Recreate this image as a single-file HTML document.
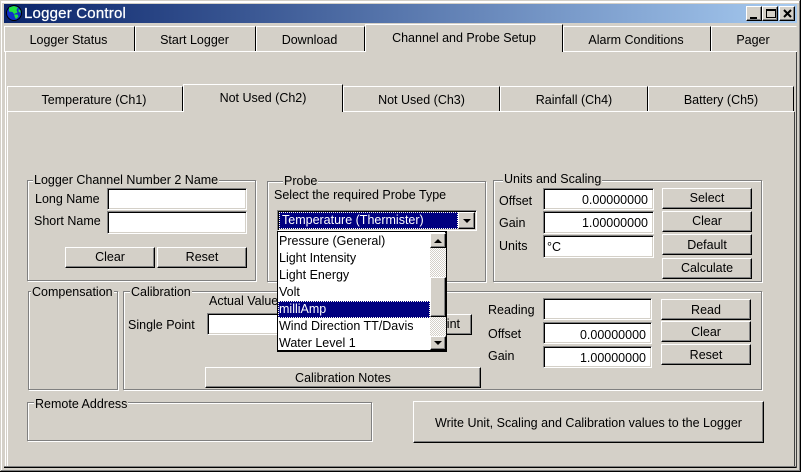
<!DOCTYPE html>
<html><head><meta charset="utf-8"><title>Logger Control</title>
<style>
html,body{margin:0;padding:0;background:#d4d0c8}
body{position:relative;width:801px;height:472px;overflow:hidden;font:12.5px/15px "Liberation Sans",sans-serif;color:#000}
div,span{position:absolute;box-sizing:border-box;white-space:nowrap}
.l{background:#fff}.g{background:#808080}.k{background:#000}.d{background:#404040}.b{background:#d4d0c8}
.t{height:15px}
.c{text-align:center}
.btn{background:#d4d0c8;border-style:solid;border-width:1px;border-color:#fff #000 #000 #fff;box-shadow:inset -1px -1px 0 #808080;text-align:center}
.in{background:#fff;border-style:solid;border-width:1px;border-color:#808080 #fff #fff #808080;box-shadow:inset 1px 1px 0 #000,inset -1px -1px 0 #d4d0c8;outline:0;text-align:right;padding:4px 5px 0 0;line-height:15px}
.grp{border:1px solid #808080;box-shadow:1px 1px 0 #fff,inset 1px 1px 0 #fff}
.lg{background:#d4d0c8;padding:0 1px;height:15px}
.tab{background:#d4d0c8;border-style:solid;border-width:1px 1px 0 1px;border-color:#fff #000 #000 #fff;text-align:center}
.sh{padding-right:2px}
.item{left:0;width:152px;height:17px;padding-left:1px;line-height:17px}
.chk{background-color:#fff;background-image:linear-gradient(45deg,#d4d0c8 25%,transparent 25%,transparent 75%,#d4d0c8 75%),linear-gradient(45deg,#d4d0c8 25%,transparent 25%,transparent 75%,#d4d0c8 75%);background-size:2px 2px;background-position:0 0,1px 1px}
</style></head><body>

<!-- outer window frame -->
<div class="l" style="left:1px;top:1px;width:798px;height:2px"></div>
<div class="l" style="left:1px;top:1px;width:1px;height:469px"></div>
<div class="g" style="left:799px;top:1px;width:1px;height:470px"></div>
<div class="k" style="left:800px;top:0;width:1px;height:472px"></div>
<div class="g" style="left:1px;top:470px;width:799px;height:1px"></div>
<div class="k" style="left:0;top:471px;width:801px;height:1px"></div>

<!-- title bar -->
<div style="left:4px;top:4px;width:793px;height:19px;background:linear-gradient(90deg,#0a246a,#a6caf0)"></div>
<svg style="position:absolute;left:6px;top:5px" width="16" height="16" viewBox="0 0 16 16"><circle cx="8" cy="8" r="7.5" fill="#1030c8" stroke="#000" stroke-width="1"/><path d="M3 2.5 L8 1 L12 2.5 L10.5 5 L11.5 7.5 L8 9 L6.5 7 L3 6.5Z M8 9.5 L11.5 9.5 L12.5 11.5 L10 14 L9 12.5Z M12.5 4 L14.5 5.5 L14.5 8 L12.5 6.5Z" fill="#20e040"/></svg>
<div style="left:24px;top:5px;color:#fff;font-size:15px;line-height:18px;letter-spacing:.2px;-webkit-text-stroke:.25px #fff">Logger Control</div>
<div class="btn" style="left:746px;top:6px;width:16px;height:15px"><div class="k" style="left:3px;top:10px;width:7px;height:2px"></div></div>
<div class="btn" style="left:762px;top:6px;width:16px;height:15px"><div style="left:3px;top:2px;width:10px;height:9px;border:1px solid #000;border-top-width:2px"></div></div>
<div class="btn" style="left:779px;top:6px;width:16px;height:15px"><svg style="position:absolute;left:3px;top:2px" width="9" height="9" viewBox="0 0 9 9"><path d="M1 1 L8 8 M8 1 L1 8" stroke="#000" stroke-width="2"/></svg></div>

<!-- top tabs -->
<div class="tab sh" style="left:4px;top:26px;width:131px;height:25px;line-height:27px">Logger Status</div>
<div class="tab sh" style="left:135px;top:26px;width:121px;height:25px;line-height:27px">Start Logger</div>
<div class="tab sh" style="left:256px;top:26px;width:109px;height:25px;line-height:27px">Download</div>
<div class="tab sh" style="left:563px;top:26px;width:148px;height:25px;line-height:27px">Alarm Conditions</div>
<div class="tab sh" style="left:711px;top:26px;width:86px;height:25px;line-height:27px;border-right-color:#d4d0c8">Pager</div>
<div class="l" style="left:4px;top:51px;width:361px;height:1px"></div>
<div class="l" style="left:563px;top:51px;width:234px;height:1px"></div>
<div class="tab" style="left:365px;top:24px;width:198px;height:28px;line-height:27px;border-bottom:0">Channel and Probe Setup</div>

<!-- outer pane -->
<div class="l" style="left:5px;top:52px;width:1px;height:415px"></div>
<div class="d" style="left:796px;top:52px;width:1px;height:416px"></div>
<div class="g" style="left:4px;top:466px;width:792px;height:1px"></div>
<div class="k" style="left:4px;top:467px;width:792px;height:1px"></div>

<!-- inner tabs -->
<div class="tab sh" style="left:7px;top:86px;width:176px;height:25px;line-height:27px">Temperature (Ch1)</div>
<div class="tab" style="left:343px;top:86px;width:157px;height:25px;line-height:27px">Not Used (Ch3)</div>
<div class="tab" style="left:500px;top:86px;width:148px;height:25px;line-height:27px">Rainfall (Ch4)</div>
<div class="tab" style="left:648px;top:86px;width:146px;height:25px;line-height:27px">Battery (Ch5)</div>
<div class="l" style="left:7px;top:111px;width:176px;height:1px"></div>
<div class="l" style="left:343px;top:111px;width:451px;height:1px"></div>
<div class="tab" style="left:183px;top:84px;width:160px;height:28px;line-height:27px;border-bottom:0">Not Used (Ch2)</div>
<div class="l" style="left:7px;top:112px;width:1px;height:354px"></div>
<div class="d" style="left:794px;top:112px;width:1px;height:354px"></div>

<!-- channel name group -->
<div class="grp" style="left:27px;top:180px;width:229px;height:101px"></div>
<div class="lg" style="left:33px;top:173px">Logger Channel Number 2 Name</div>
<div class="t" style="left:35px;top:192px">Long Name</div>
<div class="t" style="left:34px;top:214px">Short Name</div>
<div class="in" style="left:107px;top:188px;width:140px;height:22px"></div>
<div class="in" style="left:107px;top:211px;width:140px;height:23px"></div>
<div class="btn" style="left:65px;top:247px;width:90px;height:21px;line-height:19px">Clear</div>
<div class="btn" style="left:157px;top:247px;width:90px;height:21px;line-height:19px">Reset</div>

<!-- probe group -->
<div class="grp" style="left:267px;top:181px;width:219px;height:101px"></div>
<div class="lg" style="left:283px;top:174px">Probe</div>
<div class="t" style="left:274px;top:188px">Select the required Probe Type</div>
<div class="in" style="left:277px;top:210px;width:200px;height:21px"></div>
<div style="left:279px;top:212px;width:179px;height:17px;background:#000080;color:#fff;line-height:17px;padding-left:3px;outline:1px dotted #ffe;outline-offset:-1px">Temperature (Thermister)</div>
<div class="btn" style="left:458px;top:212px;width:17px;height:17px"><div style="left:4px;top:6px;width:0;height:0;border:4px solid transparent;border-top-color:#000;border-bottom:0"></div></div>

<!-- units group -->
<div class="grp" style="left:493px;top:180px;width:269px;height:102px"></div>
<div class="lg" style="left:503px;top:172px">Units and Scaling</div>
<div class="t" style="left:499px;top:194px">Offset</div>
<div class="t" style="left:499px;top:216px">Gain</div>
<div class="t" style="left:499px;top:239px">Units</div>
<div class="in" style="left:543px;top:188px;width:111px;height:22px">0.00000000</div>
<div class="in" style="left:543px;top:211px;width:111px;height:23px">1.00000000</div>
<div class="in" style="left:543px;top:235px;width:111px;height:23px;text-align:left;padding-left:3px">°C</div>
<div class="btn" style="left:662px;top:188px;width:90px;height:21px;line-height:19px">Select</div>
<div class="btn" style="left:662px;top:211px;width:90px;height:21px;line-height:19px">Clear</div>
<div class="btn" style="left:662px;top:234px;width:90px;height:21px;line-height:21px">Default</div>
<div class="btn" style="left:662px;top:258px;width:90px;height:21px;line-height:19px">Calculate</div>

<!-- compensation -->
<div class="grp" style="left:28px;top:291px;width:90px;height:99px"></div>
<div class="lg" style="left:31px;top:285px">Compensation</div>

<!-- calibration -->
<div class="grp" style="left:123px;top:291px;width:639px;height:99px"></div>
<div class="lg" style="left:130px;top:285px">Calibration</div>
<div class="t" style="left:209px;top:294px">Actual Value</div>
<div class="t" style="left:128px;top:318px">Single Point</div>
<div class="in" style="left:207px;top:313px;width:140px;height:22px"></div>
<div class="btn" style="left:350px;top:314px;width:122px;height:21px;line-height:19px;text-align:right;padding-right:11px">Single Point</div>
<div class="t" style="left:488px;top:303px">Reading</div>
<div class="t" style="left:488px;top:327px">Offset</div>
<div class="t" style="left:488px;top:349px">Gain</div>
<div class="in" style="left:543px;top:298px;width:109px;height:22px"></div>
<div class="in" style="left:543px;top:322px;width:109px;height:22px;padding-top:5px">0.00000000</div>
<div class="in" style="left:543px;top:346px;width:109px;height:22px">1.00000000</div>
<div class="btn" style="left:661px;top:299px;width:90px;height:21px;line-height:21px">Read</div>
<div class="btn" style="left:661px;top:321px;width:90px;height:21px;line-height:21px">Clear</div>
<div class="btn" style="left:661px;top:344px;width:90px;height:21px;line-height:21px">Reset</div>
<div class="btn" style="left:205px;top:367px;width:276px;height:21px;line-height:20px">Calibration Notes</div>

<!-- remote address -->
<div class="grp" style="left:27px;top:402px;width:345px;height:39px"></div>
<div class="lg" style="left:34px;top:397px">Remote Address</div>

<!-- write -->
<div class="btn" style="left:413px;top:401px;width:351px;height:42px;line-height:42px">Write Unit, Scaling and Calibration values to the Logger</div>

<!-- dropdown list -->
<div style="left:277px;top:231px;width:170px;height:121px;background:#fff;border:1px solid #000;box-shadow:inset -1px -1px 0 #000">
<div class="item" style="top:1px">Pressure (General)</div>
<div class="item" style="top:18px">Light Intensity</div>
<div class="item" style="top:35px">Light Energy</div>
<div class="item" style="top:52px">Volt</div>
<div class="item" style="top:69px;background:#000080;color:#fff;outline:1px dotted #ffe;outline-offset:-1px">milliAmp</div>
<div class="item" style="top:86px">Wind Direction TT/Davis</div>
<div class="item" style="top:103px">Water Level 1</div>
<div class="chk" style="left:152px;top:1px;width:16px;height:117px"></div>
<div class="btn" style="left:152px;top:1px;width:16px;height:15px"><div style="left:3px;top:5px;width:0;height:0;border:4px solid transparent;border-bottom-color:#000;border-top:0"></div></div>
<div class="btn" style="left:152px;top:45px;width:16px;height:40px"></div>
<div class="btn" style="left:152px;top:104px;width:16px;height:14px"><div style="left:3px;top:4px;width:0;height:0;border:4px solid transparent;border-top-color:#000;border-bottom:0"></div></div>
</div>

</body></html>
